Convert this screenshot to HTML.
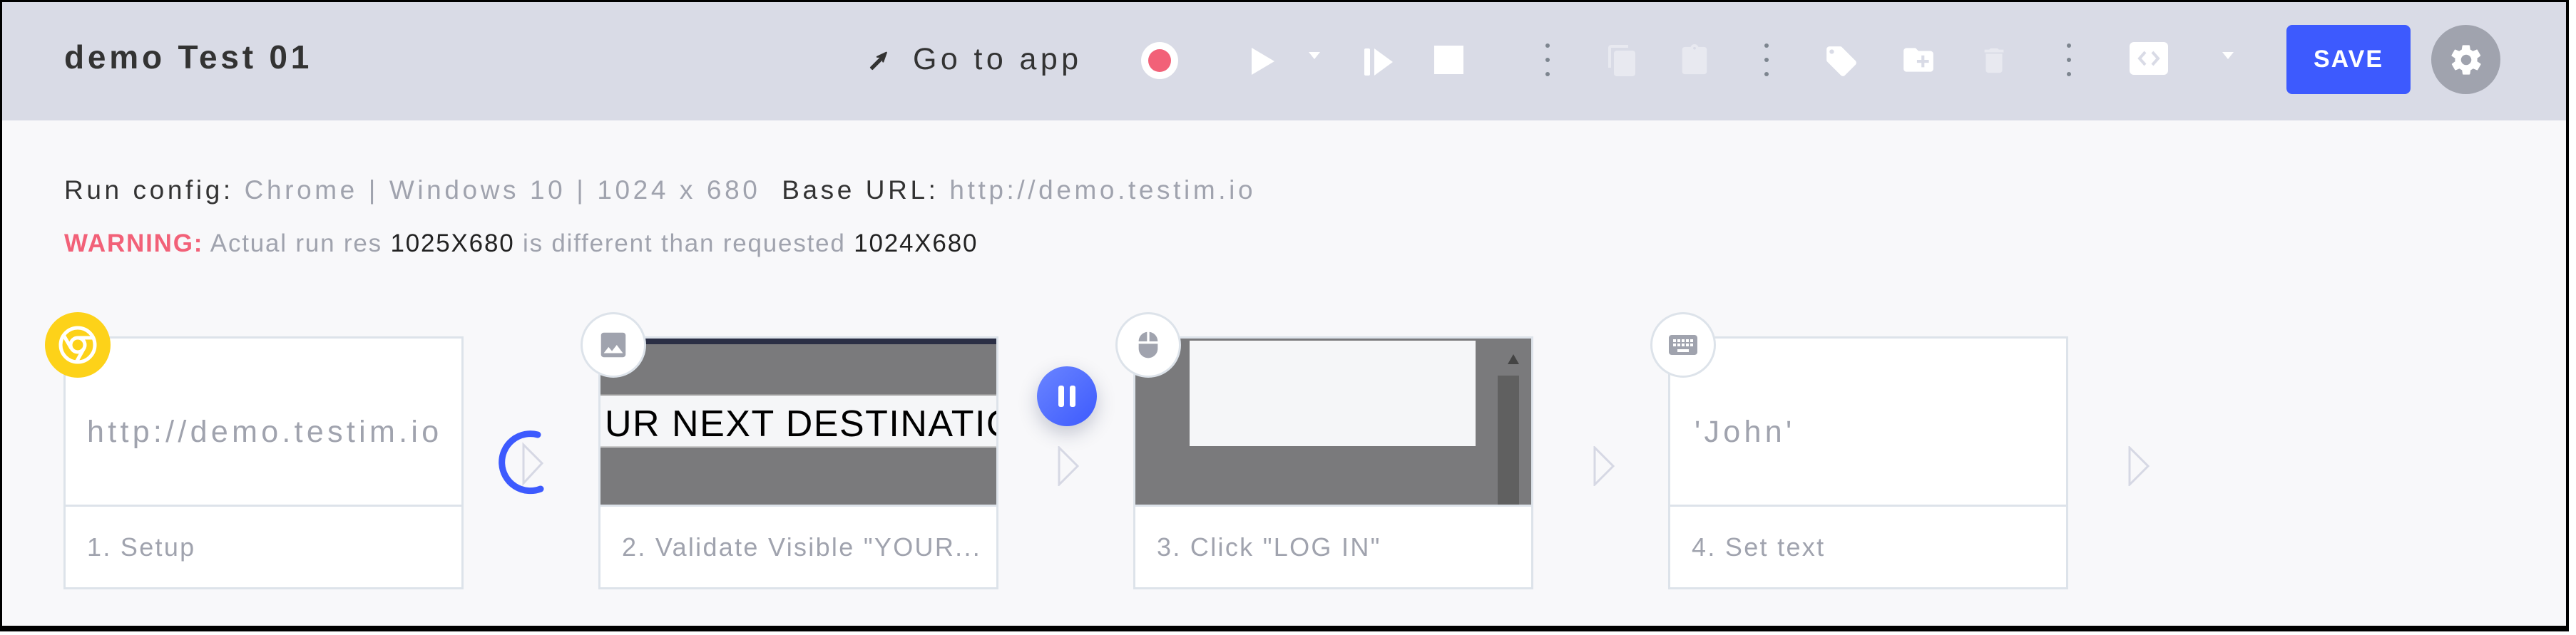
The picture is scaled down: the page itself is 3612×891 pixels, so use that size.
<!DOCTYPE html>
<html><head><meta charset="utf-8"><style>
*{margin:0;padding:0;box-sizing:border-box}
body{width:3612px;height:891px;background:#fff;position:relative;overflow:hidden;font-family:"Liberation Sans",sans-serif}
.frame{position:absolute;left:0;top:0;width:3602px;height:886px;border:3px solid #000;border-right-width:4px;border-bottom-width:8px;background:#f8f8fa;overflow:hidden}
.hdr{position:absolute;left:0;top:0;width:100%;height:166px;background:#d9dbe6}
.t{position:absolute;white-space:nowrap;line-height:1}
.card{position:absolute;top:469px;width:561px;height:355px;border:3px solid #dde3ea;background:#fff}
.card .shot{position:absolute;left:0;top:0;width:555px;height:233px;overflow:hidden}
.card .div{position:absolute;left:0;top:233px;width:555px;height:3px;background:#dde3ea}
.card .lbl{position:absolute;left:30px;top:275px;font-size:36px;color:#a0a3ae;letter-spacing:2.3px;line-height:1;white-space:nowrap}
.badge{position:absolute;width:92px;height:92px;border-radius:50%;background:#fff;border:3px solid #dde3ea;display:flex;align-items:center;justify-content:center}
.arr{position:absolute;top:623px}
</style></head><body>
<div class="frame">
<div class="hdr"></div>
<div class="t" style="left:87px;top:54px;font-size:46px;font-weight:bold;color:#333;letter-spacing:4.8px">demo Test 01</div>
<svg style="position:absolute;left:1212px;top:64px" width="36" height="36" viewBox="0 0 24 24"><path d="M4 18.5 L14 8.5 L10 8.5 L18.5 4.5 L15.5 13 L15.5 10 L5.5 20 Z" fill="#333" stroke="#333" stroke-width="1.5" stroke-linejoin="round"/></svg>
<div class="t" style="left:1277px;top:59px;font-size:43px;color:#333;letter-spacing:5.4px">Go to app</div>
<div style="position:absolute;left:1597px;top:56px;width:52px;height:52px;border-radius:50%;background:#fff"></div>
<div style="position:absolute;left:1607px;top:66px;width:32px;height:32px;border-radius:50%;background:#f26178"></div>
<svg style="position:absolute;left:1748px;top:62px" width="40" height="42"><path d="M4 2 L36 21 L4 40 Z" fill="#fff"/></svg>
<svg style="position:absolute;left:1830px;top:70px" width="20" height="12"><path d="M2 0 L18 0 L10 10 Z" fill="#fff"/></svg>
<svg style="position:absolute;left:1908px;top:63px" width="44" height="42"><rect x="2" y="2" width="8" height="38" rx="2" fill="#fff"/><path d="M16 2 L42 21 L16 40 Z" fill="#fff"/></svg>
<div style="position:absolute;left:2008px;top:61px;width:41px;height:40px;background:#fff"></div>
<svg style="position:absolute;left:2160px;top:55px" width="14" height="52"><circle cx="7" cy="6" r="3" fill="#7d858f"/><circle cx="7" cy="26" r="3" fill="#7d858f"/><circle cx="7" cy="46" r="3" fill="#7d858f"/></svg>
<svg style="position:absolute;left:2248px;top:58px" width="48" height="48" viewBox="0 0 24 24"><path d="M16 1H4c-1.1 0-2 .9-2 2v14h2V3h12V1zm3 4H8c-1.1 0-2 .9-2 2v14c0 1.1.9 2 2 2h11c1.1 0 2-.9 2-2V7c0-1.1-.9-2-2-2z" fill="#e8e9f0"/></svg>
<svg style="position:absolute;left:2350px;top:58px" width="46" height="48" viewBox="0 0 24 24"><path d="M19 2h-4.2C14.4.8 13.3 0 12 0s-2.4.8-2.8 2H5c-1.1 0-2 .9-2 2v16c0 1.1.9 2 2 2h14c1.1 0 2-.9 2-2V4c0-1.1-.9-2-2-2zm-7 0c.6 0 1 .4 1 1s-.4 1-1 1-1-.4-1-1 .4-1 1-1z" fill="#e8e9f0"/></svg>
<svg style="position:absolute;left:2467px;top:55px" width="14" height="52"><circle cx="7" cy="6" r="3" fill="#7d858f"/><circle cx="7" cy="26" r="3" fill="#7d858f"/><circle cx="7" cy="46" r="3" fill="#7d858f"/></svg>
<svg style="position:absolute;left:2554px;top:58px" width="50" height="50" viewBox="0 0 24 24"><path d="M21.4 11.6l-9-9C12.1 2.2 11.6 2 11 2H4c-1.1 0-2 .9-2 2v7c0 .6.2 1.1.6 1.4l9 9c.4.4.9.6 1.4.6s1.1-.2 1.4-.6l7-7c.4-.4.6-.9.6-1.4s-.2-1.1-.6-1.4zM5.5 7C4.7 7 4 6.3 4 5.5S4.7 4 5.5 4 7 4.7 7 5.5 6.3 7 5.5 7z" fill="#fff"/></svg>
<svg style="position:absolute;left:2662px;top:56px" width="50" height="50" viewBox="0 0 24 24"><path d="M20 6h-8l-2-2H4c-1.1 0-2 .9-2 2v12c0 1.1.9 2 2 2h16c1.1 0 2-.9 2-2V8c0-1.1-.9-2-2-2zm-1 8h-3v3h-2v-3h-3v-2h3V9h2v3h3v2z" fill="#fff"/></svg>
<svg style="position:absolute;left:2770px;top:58px" width="46" height="48" viewBox="0 0 24 24"><path d="M6 19c0 1.1.9 2 2 2h8c1.1 0 2-.9 2-2V7H6v12zM19 4h-3.5l-1-1h-5l-1 1H5v2h14V4z" fill="#e8e9f0"/></svg>
<svg style="position:absolute;left:2891px;top:55px" width="14" height="52"><circle cx="7" cy="6" r="3" fill="#7d858f"/><circle cx="7" cy="26" r="3" fill="#7d858f"/><circle cx="7" cy="46" r="3" fill="#7d858f"/></svg>
<svg style="position:absolute;left:2983px;top:56px" width="54" height="46"><rect x="0" y="0" width="54" height="46" rx="6" fill="#fff"/><path d="M22 14 L14 23 L22 32 M32 14 L40 23 L32 32" stroke="#d9dbe6" stroke-width="4" fill="none"/></svg>
<svg style="position:absolute;left:3111px;top:70px" width="20" height="12"><path d="M2 0 L18 0 L10 10 Z" fill="#fff"/></svg>
<div style="position:absolute;left:3203px;top:32px;width:174px;height:97px;border-radius:8px;background:#3d5afe;color:#fff;font-size:34px;font-weight:bold;letter-spacing:2px;display:flex;align-items:center;justify-content:center">SAVE</div>
<div style="position:absolute;left:3406px;top:32px;width:97px;height:97px;border-radius:50%;background:#a0a3ae;display:flex;align-items:center;justify-content:center"><svg width="50" height="50" viewBox="0 0 24 24"><path d="M19.4 13c0-.3.1-.6.1-1s0-.7-.1-1l2.1-1.6c.2-.1.2-.4.1-.6l-2-3.5c-.1-.2-.4-.3-.6-.2l-2.5 1c-.5-.4-1.1-.7-1.7-1l-.4-2.6c0-.2-.2-.4-.5-.4h-4c-.2 0-.4.2-.5.4l-.4 2.6c-.6.3-1.2.6-1.7 1l-2.5-1c-.2-.1-.5 0-.6.2l-2 3.5c-.1.2-.1.5.1.6L4.6 11c0 .3-.1.6-.1 1s0 .7.1 1l-2.1 1.6c-.2.1-.2.4-.1.6l2 3.5c.1.2.4.3.6.2l2.5-1c.5.4 1.1.7 1.7 1l.4 2.6c0 .2.2.4.5.4h4c.2 0 .4-.2.5-.4l.4-2.6c.6-.3 1.2-.6 1.7-1l2.5 1c.2.1.5 0 .6-.2l2-3.5c.1-.2.1-.5-.1-.6L19.4 13zM12 15.5c-1.9 0-3.5-1.6-3.5-3.5s1.6-3.5 3.5-3.5 3.5 1.6 3.5 3.5-1.6 3.5-3.5 3.5z" fill="#fff"/></svg></div>

<div class="t" style="left:87px;top:245px;font-size:37px;letter-spacing:4.6px;color:#333">Run config: <span style="color:#a0a3ae">Chrome | Windows 10 | 1024 x 680</span>&nbsp; Base URL: <span style="color:#a0a3ae">http://demo.testim.io</span></div>
<div class="t" style="left:87px;top:321px;font-size:35px;color:#a0a3ae;letter-spacing:1.8px"><b style="color:#f26178">WARNING:</b> Actual run res <span style="color:#222">1025X680</span> is different than requested <span style="color:#222">1024X680</span></div>

<div class="card" style="left:86px"><div class="t" style="left:30px;top:110px;font-size:43px;color:#a0a3ae;letter-spacing:5.3px">http://demo.testim.io</div><div class="div"></div><div class="lbl">1. Setup</div></div>
<div style="position:absolute;left:60px;top:435px;width:92px;height:92px;border-radius:50%;background:#fdd219;display:flex;align-items:center;justify-content:center"><svg width="60" height="60" viewBox="0 0 60 60"><circle cx="30" cy="30" r="24" stroke="#fff" stroke-width="5" fill="none"/><circle cx="30" cy="30" r="10" stroke="#fff" stroke-width="5" fill="none"/><path d="M30 20 L52 20 M21 35 L10 16 M38 36 L28 54" stroke="#fff" stroke-width="5"/></svg></div>
<svg style="position:absolute;left:693px;top:597px" width="90" height="100"><path d="M58 10 A40 40 0 1 0 62 86" stroke="#3d5afe" stroke-width="9" fill="none" stroke-linecap="round"/><path d="M38 24 L64 50 L38 78 Z" stroke="#d6d8e4" stroke-width="3" fill="none"/></svg>

<div class="card" style="left:836px"><div class="shot" style="background:#7a7a7c"><div style="position:absolute;left:0;top:0;width:100%;height:8px;background:#2b2f45"></div><div style="position:absolute;left:0;top:78px;width:100%;height:75px;background:#f5f6f8;border-top:2px solid #999;border-bottom:2px solid #ccc"></div><div class="t" style="left:6px;top:94px;font-size:52px;color:#000;letter-spacing:1.5px">UR NEXT DESTINATION</div></div><div class="div"></div><div class="lbl">2. Validate Visible "YOUR...</div></div>
<div class="badge" style="left:811px;top:435px"><svg width="46" height="46" viewBox="0 0 24 24"><path d="M21 19V5c0-1.1-.9-2-2-2H5c-1.1 0-2 .9-2 2v14c0 1.1.9 2 2 2h14c1.1 0 2-.9 2-2zM8.5 13.5l2.5 3 3.5-4.5 4.5 6H5l3.5-4.5z" fill="#a0a3ae"/></svg></div>
<div style="position:absolute;left:1451px;top:511px;width:84px;height:84px;border-radius:50%;background:linear-gradient(135deg,#6a85ff,#3d5afe);box-shadow:0 10px 26px rgba(40,50,90,.25);display:flex;align-items:center;justify-content:center;gap:8px"><div style="width:8px;height:30px;background:#fff;border-radius:3px"></div><div style="width:8px;height:30px;background:#fff;border-radius:3px"></div></div>
<svg class="arr" style="left:1478px" width="34" height="56"><path d="M4 2 L30 28 L4 54 Z" stroke="#d6d8e4" stroke-width="3" fill="none"/></svg>

<div class="card" style="left:1586px"><div class="shot" style="background:#7a7a7c"><div style="position:absolute;left:76px;top:3px;width:401px;height:148px;background:#f5f6f8"></div><div style="position:absolute;left:508px;top:52px;width:30px;height:181px;background:#606060"></div><div style="position:absolute;left:508px;top:3px;width:30px;height:49px;background:#7a7a7c"></div><svg style="position:absolute;left:522px;top:22px" width="16" height="14"><path d="M0 14 L8 0 L16 14 Z" fill="#444"/></svg></div><div class="div"></div><div class="lbl">3. Click "LOG IN"</div></div>
<div class="badge" style="left:1561px;top:435px"><svg width="40" height="50" viewBox="0 0 24 24"><path d="M13 1.07V9h7c0-4.08-3.05-7.44-7-7.93zM4 15c0 4.42 3.58 8 8 8s8-3.58 8-8v-4H4v4zm7-13.93C7.05 1.56 4 4.92 4 9h7V1.07z" fill="#a0a3ae"/></svg></div>
<svg class="arr" style="left:2229px" width="34" height="56"><path d="M4 2 L30 28 L4 54 Z" stroke="#d6d8e4" stroke-width="3" fill="none"/></svg>

<div class="card" style="left:2336px"><div class="t" style="left:34px;top:110px;font-size:43px;color:#a0a3ae;letter-spacing:5.3px">'John'</div><div class="div"></div><div class="lbl">4. Set text</div></div>
<div class="badge" style="left:2311px;top:435px"><svg width="48" height="48" viewBox="0 0 24 24"><path d="M20 5H4c-1.1 0-2 .9-2 2v10c0 1.1.9 2 2 2h16c1.1 0 2-.9 2-2V7c0-1.1-.9-2-2-2zm-9 3h2v2h-2V8zm0 3h2v2h-2v-2zM8 8h2v2H8V8zm0 3h2v2H8v-2zm-1 2H5v-2h2v2zm0-3H5V8h2v2zm9 7H8v-2h8v2zm0-4h-2v-2h2v2zm0-3h-2V8h2v2zm3 3h-2v-2h2v2zm0-3h-2V8h2v2z" fill="#a0a3ae"/></svg></div>
<svg class="arr" style="left:2979px" width="34" height="56"><path d="M4 2 L30 28 L4 54 Z" stroke="#d6d8e4" stroke-width="3" fill="none"/></svg>
</div>
</body></html>
